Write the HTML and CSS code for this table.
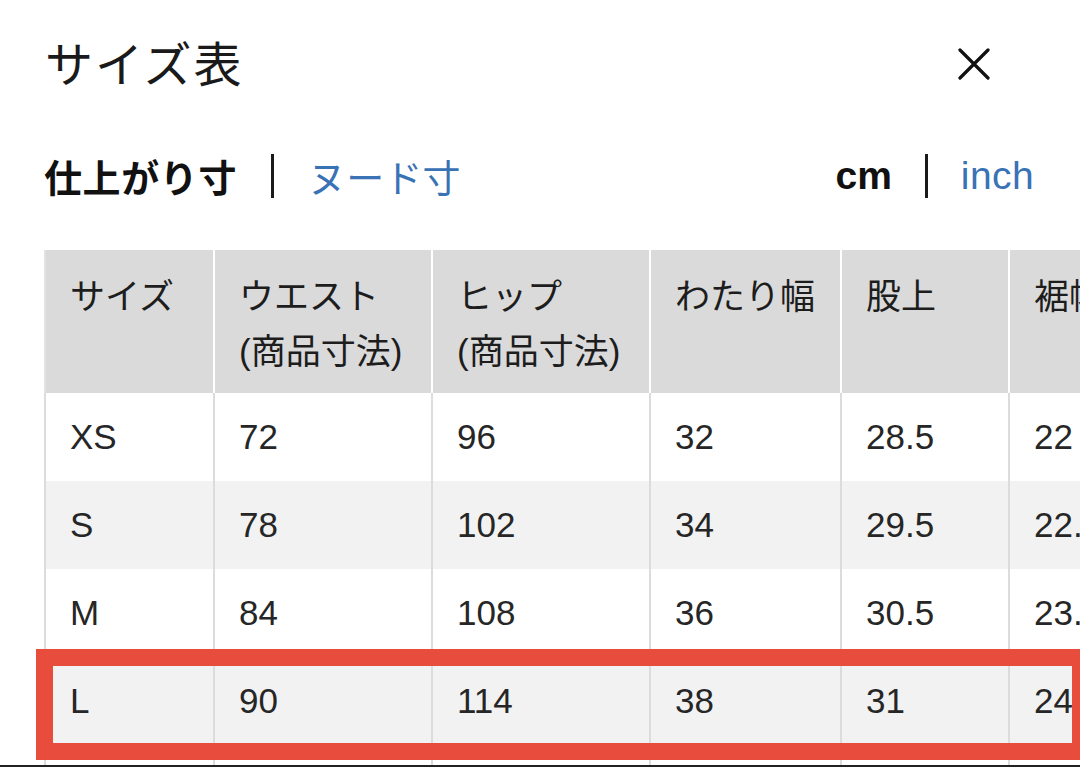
FILE: index.html
```html
<!DOCTYPE html>
<html lang="ja">
<head>
<meta charset="utf-8">
<title>サイズ表</title>
<link rel="stylesheet" href="styles.css">
</head>
<body>
<div class="page">
  <header class="header">
    <h1 class="title">サイズ表</h1>
    <button class="close" aria-label="閉じる">
      <svg width="32" height="32" viewBox="0 0 32 32"><path d="M2 2 L30 30 M30 2 L2 30" stroke="#111" stroke-width="3.2" stroke-linecap="round" fill="none"/></svg>
    </button>
  </header>
  <div class="tabs">
    <div class="switch">
      <span class="opt active">仕上がり寸</span>
      <span class="bar"></span>
      <span class="opt link">ヌード寸</span>
    </div>
    <div class="switch units">
      <span class="opt active latin">cm</span>
      <span class="bar"></span>
      <span class="opt link latin">inch</span>
    </div>
  </div>
  <div class="table-area">
    <div class="table-scroll">
      <table class="size-table">
        <colgroup>
          <col class="c1"><col class="c2"><col class="c3"><col class="c4"><col class="c5"><col class="c6">
        </colgroup>
        <thead>
          <tr>
            <th>サイズ</th>
            <th>ウエスト<br>(商品寸法)</th>
            <th>ヒップ<br>(商品寸法)</th>
            <th>わたり幅</th>
            <th>股上</th>
            <th>裾幅</th>
          </tr>
        </thead>
        <tbody>
          <tr><td>XS</td><td>72</td><td>96</td><td>32</td><td>28.5</td><td>22</td></tr>
          <tr><td>S</td><td>78</td><td>102</td><td>34</td><td>29.5</td><td>22.5</td></tr>
          <tr><td>M</td><td>84</td><td>108</td><td>36</td><td>30.5</td><td>23.5</td></tr>
          <tr><td>L</td><td>90</td><td>114</td><td>38</td><td>31</td><td>24</td></tr>
          <tr><td>XL</td><td>96</td><td>120</td><td>40</td><td>32</td><td>25</td></tr>
        </tbody>
      </table>
    </div>
    <div class="highlight"></div>
  </div>
</div>
<div class="bottom-edge"></div>
</body>
</html>
```
FILE: styles.css
```css
html, body {
  margin: 0;
  padding: 0;
  overflow: hidden;
  background: #fff;
}
body {
  font-family: "Liberation Sans", "Noto Sans CJK JP", sans-serif;
  color: #1b1b1b;
  width: 1080px;
  height: 767px;
}
.page {
  padding-left: 44px;
}
.header {
  height: 128px;
  display: flex;
  align-items: center;
  justify-content: space-between;
  padding-right: 46px;
}
.title {
  margin: -6px 0 0 1px;
  font-family: "Noto Sans CJK JP", sans-serif;
  font-weight: 400;
  font-size: 48px;
  letter-spacing: 2px;
  color: #1a1a1a;
}
.close {
  border: 0;
  background: none;
  padding: 0;
  margin-right: 44px;
  width: 32px;
  height: 32px;
  display: flex;
}
.tabs {
  height: 96px;
  display: flex;
  align-items: center;
  justify-content: space-between;
  padding-right: 46px;
}
.switch {
  display: flex;
  align-items: center;
  gap: 34px;
}
.units {
  gap: 33px;
}
.opt {
  font-family: "Noto Sans CJK JP", sans-serif;
  font-size: 38px;
  line-height: 48px;
  letter-spacing: 0.6px;
}
.opt.active {
  font-weight: 700;
  color: #111;
}
.opt.link {
  color: #3a72b6;
  font-weight: 400;
  letter-spacing: 0.2px;
}
.opt.latin {
  font-family: "Liberation Sans", sans-serif;
  font-size: 39px;
  letter-spacing: 0;
}
.units .opt.link {
  letter-spacing: 0.4px;
}
.bar {
  width: 3px;
  height: 44px;
  background: #1a1a1a;
}
.table-area {
  position: relative;
  margin-top: 26px;
}
.table-scroll {
  overflow: hidden;
  margin-right: -60px;
}
.size-table {
  border-collapse: separate;
  border-spacing: 0;
  table-layout: fixed;
  width: 1162px;
  font-size: 35px;
}
.c1 { width: 169px; }
.c2 { width: 218px; }
.c3 { width: 218px; }
.c4 { width: 191px; }
.c5 { width: 168px; }
.c6 { width: 198px; }
.size-table th,
.size-table td {
  box-sizing: border-box;
  text-align: left;
  padding: 0 10px 0 24px;
  white-space: nowrap;
  overflow: hidden;
}
.size-table th {
  height: 143px;
  vertical-align: top;
  padding-top: 19px;
  line-height: 55px;
  font-weight: 400;
  background: #dadada;
  border-left: 2px solid #fff;
  color: #1d1d1d;
}
.size-table th:first-child {
  border-left-color: #e2e2e2;
}
.size-table td {
  height: 88px;
  vertical-align: middle;
  border-left: 2px solid #dcdcdc;
  color: #262626;
}
.size-table tbody tr:nth-child(even) td {
  background: #f2f2f2;
}
.highlight {
  position: absolute;
  left: -8px;
  top: 399px;
  width: 1053px;
  height: 111px;
  box-sizing: border-box;
  border: 17px solid #e74c3c;
  pointer-events: none;
}
.bottom-edge {
  position: fixed;
  left: 0;
  right: 0;
  bottom: 0;
  height: 2px;
  background: #222;
}
```
